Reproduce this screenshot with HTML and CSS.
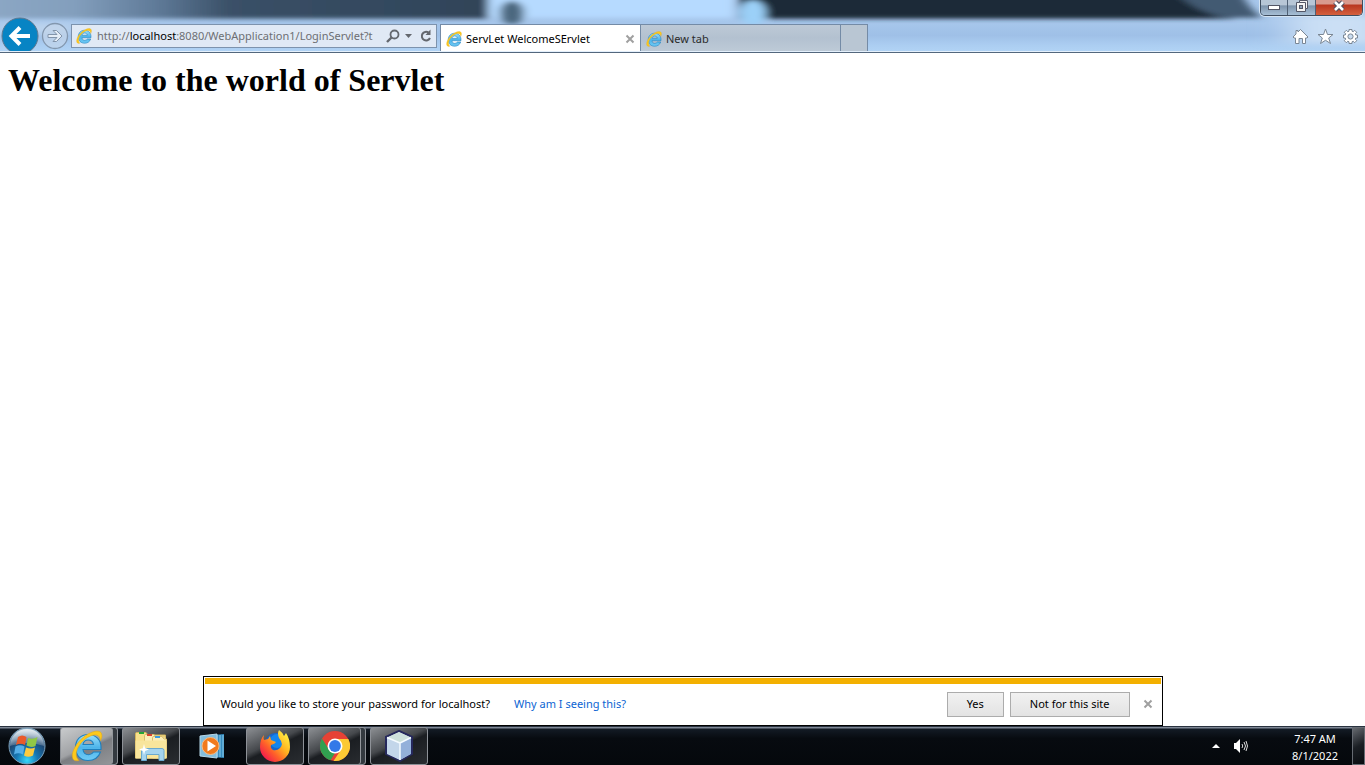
FILE: index.html
```html
<!DOCTYPE html>
<html lang="en">
<head>
<meta charset="utf-8">
<title>ServLet WelcomeSErvlet</title>
<link rel="stylesheet" href="styles.css">
</head>
<body>
<svg class="defs" aria-hidden="true">
  <defs>
    <linearGradient id="blueE" x1="0" y1="0" x2="0" y2="1"><stop offset="0" stop-color="#9be0fb"/><stop offset=".5" stop-color="#4db4ea"/><stop offset="1" stop-color="#6fcaf5"/></linearGradient>
    <symbol id="ie" viewBox="0 0 32 32">
      <path fill-rule="evenodd" d="M17 4.500C25 4.500 30 10 30 17V19.500H12C12.500 23 14.500 24.700 17.500 24.700C20 24.700 21.500 23.500 22.500 22H29.500C27.500 27.500 23 30.500 17 30.500C9.500 30.500 4.500 25 4.500 17.500C4.500 10 9.500 4.500 17 4.500ZM12 14.500H22.500C22 11.500 20 10 17.300 10C14.500 10 12.500 11.500 12 14.500Z" fill="url(#blueE)" stroke="#1f7fbd" stroke-width="1.100"/>
      <path d="M8 30.500C-1.500 33-.5 21 8 11.500C16 2.500 28-2 30.500 3.500C31.500 6 30.700 8.500 29.500 11C29.500 4.500 24 3 16.500 7.500C7.500 13 1.500 25 8 30.500Z" fill="#fdc91c" stroke="#dca31c" stroke-width=".5"/>
    </symbol>
  </defs>
</svg>
<header class="chrome">
  <svg class="glass" viewBox="0 0 1365 53" preserveAspectRatio="none" aria-hidden="true">
    <defs>
      <filter id="soft" x="-20%" y="-50%" width="140%" height="200%"><feGaussianBlur stdDeviation="5 2"/></filter>
      <filter id="wide" x="-30%" y="-80%" width="160%" height="260%"><feGaussianBlur stdDeviation="18 3"/></filter>
      <linearGradient id="frost" x1="0" y1="0" x2="0" y2="1"><stop offset="0" stop-color="#a9c8ec"/><stop offset=".45" stop-color="#a6c6eb"/><stop offset=".68" stop-color="#9fc0e7"/><stop offset=".86" stop-color="#abcdf1"/><stop offset="1" stop-color="#b2d4f5"/></linearGradient>
      <linearGradient id="fade" x1="0" y1="0" x2="1" y2="0"><stop offset="0" stop-color="#8ea9c6"/><stop offset=".2" stop-color="#839fbd"/><stop offset=".36" stop-color="#5f7a98"/><stop offset=".5" stop-color="#3a5067"/><stop offset="1" stop-color="#2f4358"/></linearGradient>
    </defs>
    <rect width="1365" height="53" fill="url(#frost)"/>
    <g filter="url(#soft)">
      <rect x="-30" y="-20" width="520" height="39" fill="url(#fade)"/>
      <rect x="488" y="-20" width="245" height="38" fill="#b6daff"/>
      <circle cx="512" cy="13" r="12" fill="#4c687f"/>
      <path d="M739-20H1180C1195 5 1220 16 1235 19H739Z" fill="#1a2938"/>
      <path d="M1165-20H1235C1245 5 1255 12 1262 18H1225C1200 12 1185 5 1165-20Z" fill="#425a72"/>
      <circle cx="753" cy="13" r="13" fill="#9bd0f8"/>
    </g>
    <g filter="url(#wide)">
      <rect x="1290" y="15" width="100" height="30" fill="#cbdff5"/>
      <rect x="0" y="23" width="75" height="12" fill="#bdd4ee"/>
    </g>
  </svg>
  <div class="caption">
    <button class="cap" aria-label="Minimize"><svg width="14" height="12" viewBox="0 0 14 12"><rect x="1.500" y="5.500" width="11" height="4" fill="#fff" stroke="#535666"/></svg></button>
    <button class="cap" aria-label="Restore"><svg width="14" height="12" viewBox="0 0 14 12"><path d="M4.500.500H12.500V8.500H10.500V11.500H1.500V2.500H4.500Z" fill="#f4f4f4" stroke="#535666"/><path d="M4.500 2.500H10.500V8.500" fill="none" stroke="#535666"/><rect x="4.500" y="5.500" width="3" height="3" fill="#8ba0b7" stroke="#535666"/></svg></button>
    <button class="cap cap-close" aria-label="Close"><svg width="14" height="12" viewBox="0 0 14 12"><path d="M3 2L11 10M11 2L3 10" stroke="#565160" stroke-width="5"/><path d="M3 2L11 10M11 2L3 10" stroke="#fff" stroke-width="2.600"/></svg></button>
  </div>
  <div class="toolbar">
    <div class="history">
      <button class="back" aria-label="Back"><svg width="38" height="38" viewBox="0 0 38 38"><circle cx="19" cy="19" r="18" fill="#0784c4" stroke="#60788e"/><path d="M29 19H12M19 10.500L10.500 19L19 27.500" fill="none" stroke="#fff" stroke-width="4"/></svg></button>
      <button class="forward" aria-label="Forward"><svg width="28" height="28" viewBox="0 0 28 28"><circle cx="14" cy="14" r="12.500" fill="#c5d6ea" fill-opacity=".65" stroke="#8397ae" stroke-width="1.300"/><path d="M7 12.500H16L12 8.500H15.500L21 14L15.500 19.500H12L16 15.500H7Z" fill="#e4edf7" stroke="#8294aa"/></svg></button>
    </div>
    <div class="address">
      <svg class="fav" width="16" height="16"><use href="#ie"/></svg>
      <a class="url" href="#">http://<b>localhost</b>:8080/WebApplication1/LoginServlet?t</a>
      <button aria-label="Search"><svg width="14" height="14" viewBox="0 0 14 14"><circle cx="8.500" cy="5.500" r="4" fill="none" stroke="#64686e" stroke-width="1.800"/><path d="M5.500 8.500L1 13" stroke="#64686e" stroke-width="2.400"/></svg></button>
      <button aria-label="Show address list"><svg width="8" height="14" viewBox="0 0 8 14"><path d="M0 5H7L3.500 9Z" fill="#64686e"/></svg></button>
      <button class="refresh" aria-label="Refresh"><svg width="12" height="14" viewBox="0 0 12 14"><path d="M8.500 3.500A4.300 4.300 0 1 0 10 9" fill="none" stroke="#64686e" stroke-width="2"/><path d="M10.500.500V6H5.500Z" fill="#64686e"/></svg></button>
    </div>
    <nav class="tabs">
      <div class="tab active"><svg class="fav" width="16" height="16"><use href="#ie"/></svg><a href="#">ServLet WelcomeSErvlet</a><button class="x" aria-label="Close tab"><svg width="10" height="10" viewBox="0 0 10 10"><path d="M1.500 1.500L8.500 8.500M8.500 1.500L1.500 8.500" stroke="#a0a0a0" stroke-width="2"/></svg></button></div>
      <div class="tab"><svg class="fav" width="16" height="16"><use href="#ie"/></svg><a href="#">New tab</a></div>
      <button class="newtab" aria-label="New tab"></button>
    </nav>
    <div class="tools">
      <button aria-label="Home"><svg width="17" height="17" viewBox="0 0 17 17"><path d="M8.500 1.500L16 9L15 10H13.500V15.500H10.500V10.500H7V15.500H3.500V10H2L1 9L4 6V2.500H6V4Z" fill="#fff" stroke="#7b8794"/></svg></button>
      <button aria-label="Favorites"><svg width="17" height="17" viewBox="0 0 17 17"><path d="M8.500 1L10.500 6.500H16L11.700 10L13.500 15.500L8.500 12.300L3.500 15.500L5.300 10L1 6.500H6.500Z" fill="#fff" stroke="#7b8794"/></svg></button>
      <button aria-label="Tools"><svg width="17" height="17" viewBox="0 0 17 17"><path d="M7 1.500H10V3.200L11.200 3.700L12.700 2.300L14.700 4.300L13.300 5.800L13.800 7H15.500V10H13.800L13.300 11.200L14.700 12.700L12.700 14.700L11.200 13.300L10 13.800V15.500H7V13.800L5.800 13.300L4.300 14.700L2.300 12.700L3.700 11.200L3.200 10H1.500V7H3.200L3.700 5.800L2.300 4.300L4.300 2.300L5.800 3.700L7 3.200Z" fill="#fff" stroke="#7b8794"/><circle cx="8.500" cy="8.500" r="2.600" fill="#c9dcf0" stroke="#7b8794"/></svg></button>
    </div>
  </div>
</header>
<main class="page">
  <h1>Welcome to the world of Servlet</h1>
</main>
<section class="notice">
  <p>Would you like to store your password for localhost?</p>
  <a href="#">Why am I seeing this?</a>
  <div class="actions">
    <button class="push">Yes</button>
    <button class="push">Not for this site</button>
    <button class="x" aria-label="Dismiss"><svg width="10" height="10" viewBox="0 0 10 10"><path d="M1.500 1.500L8.500 8.500M8.500 1.500L1.500 8.500" stroke="#a0a0a0" stroke-width="2"/></svg></button>
  </div>
</section>
<footer class="taskbar">
  <button class="start" aria-label="Start"><svg width="38" height="38" viewBox="0 0 38 38">
    <defs><radialGradient id="orb" cx=".5" cy=".9" r=".85"><stop offset="0" stop-color="#36d8fa"/><stop offset=".35" stop-color="#1778b5"/><stop offset=".7" stop-color="#1d4772"/><stop offset="1" stop-color="#98b3c7"/></radialGradient><linearGradient id="shine" x1="0" y1="0" x2="0" y2="1"><stop offset="0" stop-color="#fff" stop-opacity=".75"/><stop offset="1" stop-color="#fff" stop-opacity=".18"/></linearGradient></defs>
    <circle cx="19" cy="19" r="18" fill="url(#orb)" stroke="#7ba0ba"/><path d="M2 19A17 17 0 0 1 36 19Q19 13 2 19Z" fill="url(#shine)"/>
    <path d="M10 10Q14 7 18.500 10L17 18Q12 15.500 8 18Z" fill="#ea5a2a"/><path d="M20 11Q25 13 29.500 10L27.500 19Q23 21 18.500 18.500Z" fill="#91c845"/><path d="M7.500 19.500Q12 17 16.500 19.500L15 27.500Q10 25 6 27.500Z" fill="#55aee8"/><path d="M18 20.500Q23 22.500 27 20.500L25 28.500Q20 31 16 28.500Z" fill="#fccb3e"/></svg></button>
  <div class="apps">
    <button class="app stack lit" aria-label="Internet Explorer"><svg width="32" height="32"><use href="#ie"/></svg></button>
    <button class="app" aria-label="Windows Explorer"><svg width="34" height="32" viewBox="0 0 34 32">
      <path d="M1.500 28V3.500Q1.500 2.500 3 2.500H12L14 5H31.500V28Z" fill="#f7e08c" stroke="#d3b45c"/>
      <rect x="5" y="2" width="5" height="2" fill="#25a536"/>
      <path d="M10.500 28V5.500Q10.500 4.500 12 4.500H20L22 7H31.500V28Z" fill="#fbeeb8" stroke="#d9bd6b"/>
      <rect x="13" y="4" width="5" height="2" fill="#d8432f"/>
      <path d="M18.500 28V7.500Q18.500 6.500 20 6.500H28L30 9H32.500V28Z" fill="#fbeeb8" stroke="#d9bd6b"/>
      <rect x="21" y="6" width="5" height="2" fill="#3c9be0"/>
      <path d="M1.500 10.500H32.500V28.500H1.500Z" fill="#f8e59c"/>
      <path d="M7.500 30.500V20.500Q7.500 18.500 9.500 18.500H28Q30 18.500 30 20.500V30.500H25V24.500H12.500V30.500Z" fill="#a5d4ee" stroke="#6aa9cf"/>
      <path d="M10 14L11 18L15 19.500L11 21L10 25L9 21L5 19.500L9 18Z" fill="#fff"/></svg></button>
    <button class="app plain" aria-label="Windows Media Player"><svg width="30" height="28" viewBox="0 0 30 28"><path d="M15 3L26 2V26L15 25Z" fill="#358abd"/><path d="M19 3V25M22 3V25M25 3V25" stroke="#8bcbea"/><path d="M2 4L19 2V26L2 24Z" fill="#84bedd" stroke="#b7d8e9"/><circle cx="12.500" cy="14" r="8.500" fill="#f17a1d" stroke="#f7ba83"/><path d="M9.500 8.500L18 14L9.500 19.500Z" fill="#fff"/></svg></button>
    <button class="app" aria-label="Firefox"><svg width="32" height="32" viewBox="0 0 32 32">
      <defs><linearGradient id="fox" x1=".9" y1=".1" x2=".15" y2=".85"><stop offset="0" stop-color="#fff044"/><stop offset=".4" stop-color="#ffb321"/><stop offset=".7" stop-color="#ff6229"/><stop offset="1" stop-color="#f3204a"/></linearGradient></defs>
      <circle cx="17" cy="14" r="11" fill="#1767ce"/><circle cx="18" cy="11" r="7" fill="#1485ef"/>
      <path d="M5 5Q4 8 5 10L9 9L11 6L12 10L17 12Q16 14 12 15Q11 18 14 20Q18 21 21 18Q25 14 20 8Q18 3 20 0Q23 2 25 6L27 3Q31 9 31 17A15 15 0 0 1 1 17Q1 9 5 5Z" fill="url(#fox)"/></svg></button>
    <button class="app stack" aria-label="Chrome"><svg width="30" height="30" viewBox="0 0 30 30"><circle cx="15" cy="15" r="15" fill="#e64235"/><path d="M2 7.500L8.900 18.500L15 22L10.500 29.300A15 15 0 0 1 2 7.500Z" fill="#31a050"/><path d="M15 8H28.300A15 15 0 0 1 13.500 29.900L21.200 18.500Z" fill="#fcc934"/><circle cx="15" cy="15" r="7.500" fill="#fff"/><circle cx="15" cy="15" r="5.900" fill="#3479e8"/></svg></button>
    <button class="app" aria-label="NetBeans"><svg width="32" height="32" viewBox="0 0 32 32"><path d="M16 1L29 7V24L17 31L3 24V7Z" fill="#e7eff2" stroke="#25285c" stroke-width="2"/><path d="M16 2L28 7.500L17 13L4 7.500Z" fill="#cee1dc"/><path d="M4 8L17 13V30L4 24Z" fill="#c3d6ea"/><path d="M17 13L28 8V24L17 30Z" fill="#93b0da"/><path d="M17 12V30M17 13L4 7.500M17 13L28 7.500" stroke="#f4faff" stroke-width="1.500" fill="none"/></svg></button>
  </div>
  <div class="tray">
    <button aria-label="Show hidden icons"><svg width="8" height="5" viewBox="0 0 8 5"><path d="M4 0L8 4H0Z" fill="#fff"/></svg></button>
    <button aria-label="Volume"><svg width="16" height="16" viewBox="0 0 16 16"><path d="M1 5H3L7 1V15L3 11H1Z" fill="#fff"/><path d="M9 6Q10.500 8 9 10M11 4Q14 8 11 12M13 3Q16 8 13 13" fill="none" stroke="#ddd"/></svg></button>
    <time class="clock" datetime="2022-08-01T07:47"><span>7:47 AM</span><span>8/1/2022</span></time>
    <button class="desktop" aria-label="Show desktop"></button>
  </div>
</footer>
</body>
</html>
```
FILE: styles.css
```css
* { box-sizing: border-box; }
body {
  margin: 0;
  height: 100vh;
  display: flex;
  flex-direction: column;
  background: #fff;
  color: #000;
  font: 11px/16px "Noto Sans", "Open Sans", sans-serif;
  overflow: hidden;
}
button { margin: 0; padding: 0; border: 0; background: none; font: inherit; color: inherit; }
svg { display: block; flex: none; }
a { text-decoration: none; color: inherit; }
.defs { position: absolute; width: 0; height: 0; }

.chrome {
  position: relative;
  overflow: hidden;
  flex: none;
  border-bottom: 1px solid #53677d;
  box-shadow: inset 0 -1px #e4f0fc;
}
.glass { position: absolute; inset: 0; width: 100%; height: 100%; z-index: -1; }
.caption {
  display: flex;
  width: 103px;
  height: 16px;
  margin: 0 2px 0 auto;
  border: 1px solid #3f4d5f;
  border-top: 0;
  border-radius: 0 0 5px 5px;
  box-shadow: 0 0 0 1px #d5e4f3;
  overflow: hidden;
}
.cap {
  flex: 27;
  display: flex;
  justify-content: center;
  border-right: 1px solid #4f6075;
  background: linear-gradient(#b7c6d6 0 30%, #7e94ac 40%, #a7bfd6);
}
.cap-close { flex: 47; border: 0; background: linear-gradient(#d89a8e 0 25%, #b93720 35%, #d4603e); }

.toolbar { display: flex; height: 36px; padding-top: 8px; }
.history { display: flex; flex: none; width: 71px; padding-left: 1px; margin-top: -7px; }
.back { height: 34px; overflow: hidden; align-self: flex-start; }
.forward { align-self: flex-start; margin: 5px 0 0 2px; }
.address {
  display: flex;
  align-items: center;
  flex: 0 1 366px;
  min-width: 0;
  height: 24px;
  padding: 0 4px;
  gap: 5px;
  border: 1px solid #7d93ad;
  background: #e0e9f5;
}
.url { flex: 1; min-width: 0; overflow: hidden; white-space: nowrap; font-size: 11px; color: #6d6f73; }
.url b { font-weight: 400; color: #000; }
.refresh { margin-left: 2px; }
.tabs { display: flex; flex: 0 1 428px; height: 27px; margin-left: 3px; border: solid #748ba6; border-width: 1px 1px 0; }
.tab {
  display: flex;
  align-items: center;
  flex: 0 1 200px;
  gap: 4px;
  padding: 2px 5px 0;
  border-right: 1px solid #748ba6;
  background: linear-gradient(#bdc9d6, #b3c1d0 50%, #bdcad7);
  color: #2b2b2b;
  white-space: nowrap;
}
.tab.active { background: #fff; color: #000; }
.tab a { flex: 1; }
.newtab { flex: 1; background: #b9c6d3; }
.tools { display: flex; align-items: center; gap: 8px; margin: 0 6px 3px auto; }

.page { flex: 1; padding: 8px; }
h1 { margin: 0; font: bold 32px/38px "Liberation Serif", serif; }

.notice {
  display: flex;
  align-items: center;
  flex: none;
  width: 100%;
  max-width: 960px;
  height: 50px;
  margin: 0 auto;
  padding: 6px 9px 0 17px;
  border: 1px solid #000;
  background: linear-gradient(#f3b000, #f3b000) 1px 1px / calc(100% - 2px) 6px no-repeat #fff;
}
.notice p { margin: 0 24px 0 0; }
.notice a { color: #0b64d2; }
.actions { display: flex; align-items: center; gap: 6px; margin-left: auto; }
.push { height: 25px; padding: 0 19px; border: 1px solid #acacac; background: linear-gradient(#f1f1f1, #e3e3e3); }
.actions .x { margin-left: 7px; }

.taskbar {
  display: flex;
  align-items: stretch;
  flex: none;
  height: 39px;
  border-top: 1px solid #29323f;
  background: linear-gradient(#7e8795 0 1px, #131b25 2px, #070b10 30%, #05080c);
  color: #fff;
}
.start { padding: 0 14px 0 8px; }
.apps { display: flex; gap: 4px; }
.app {
  display: flex;
  align-items: center;
  justify-content: center;
  width: 58px;
  border: 1px solid #8d9197;
  border-radius: 3px;
  background: linear-gradient(155deg, #8c8f93, #45484c 42%, #1b1e22 52%, #2a2d31);
}
.stack { padding-right: 4px; box-shadow: inset -4px 0 #343a40, inset -5px 0 #92969b; }
.lit { background: linear-gradient(155deg, #c9cbcd, #a0a2a5 48%, #7c7e82 55%, #96989b); }
.plain { border: 0; background: none; }
.tray { display: flex; align-items: center; margin-left: auto; }
.tray button + button { margin-left: 13px; }
.clock { display: flex; flex-direction: column; width: 74px; margin-left: 29px; padding-top: 2px; text-align: center; font-size: 11px; line-height: 17px; }
.tray .desktop { align-self: stretch; width: 13px; border: 1px solid #666b72; background: linear-gradient(150deg, #666a70, #1b1f24 50%, #090c10); }
```
